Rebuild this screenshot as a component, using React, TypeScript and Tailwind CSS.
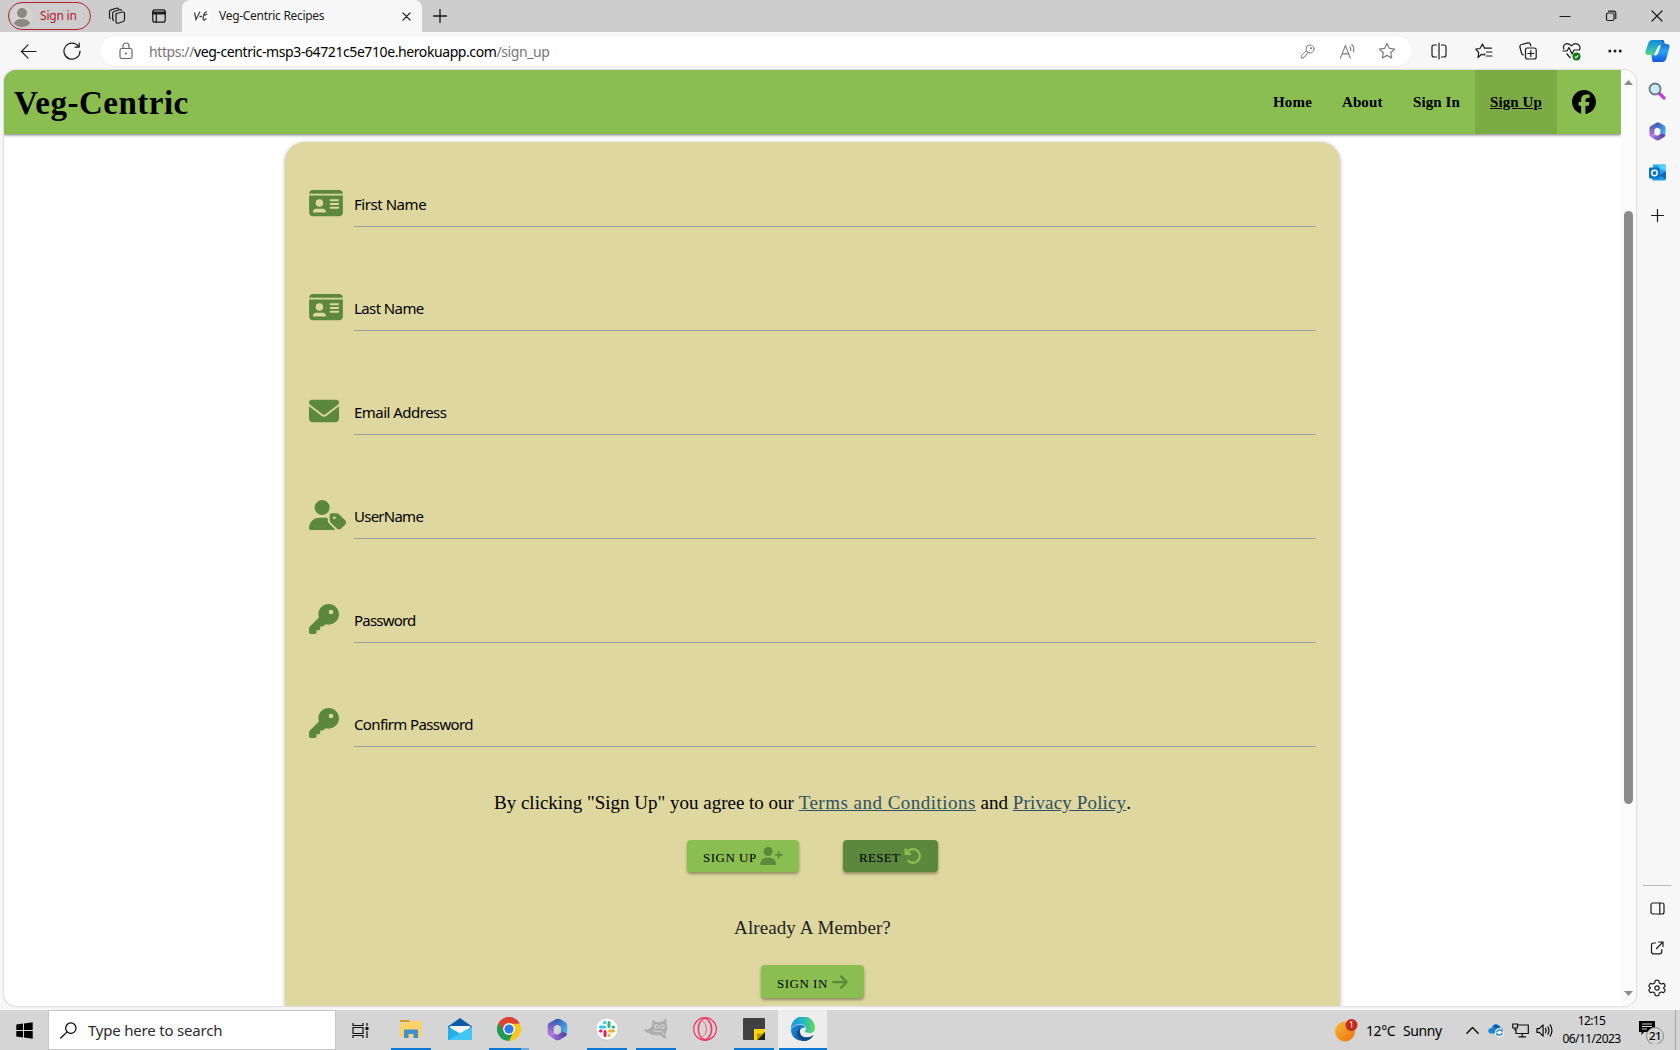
import React from "react";
import {
  FaIdCard, FaEnvelope, FaUserTag, FaKey, FaUserPlus, FaArrowRotateLeft, FaArrowRight, FaFacebook,
} from "react-icons/fa6";

const UI = "font-['Noto_Sans','Open_Sans',sans-serif]";
const SERIF = "font-['Liberation_Serif',serif]";

type SvgProps = { size?: number; className?: string; children: React.ReactNode; box?: string; sw?: number };
function Line({ size = 18, className = "", children, box = "0 0 18 18", sw = 1.2 }: SvgProps) {
  return (
    <svg width={size} height={size} viewBox={box} className={`shrink-0 ${className}`} fill="none" stroke="currentColor" strokeWidth={sw} strokeLinecap="round" strokeLinejoin="round">
      {children}
    </svg>
  );
}

function Slot({ w, children }: { w: string; children: React.ReactNode }) {
  return <div className={`flex h-full shrink-0 items-center justify-center ${w}`}>{children}</div>;
}

function M365({ size, id }: { size: number; id: string }) {
  return (
    <svg width={size} height={size} viewBox="0 0 20 20" className="shrink-0">
      <defs>
        <linearGradient id={`${id}a`} x1="0" y1="0" x2="0" y2="1"><stop offset="0" stopColor="#3a55a8" /><stop offset="1" stopColor="#c47ee8" /></linearGradient>
        <linearGradient id={`${id}b`} x1="0" y1="0" x2="1" y2="1"><stop offset="0" stopColor="#2f57b5" /><stop offset="1" stopColor="#55bdf3" /></linearGradient>
        <linearGradient id={`${id}c`} x1="0" y1="0" x2="1" y2="0"><stop offset="0" stopColor="#a97be8" /><stop offset="1" stopColor="#553a9a" /></linearGradient>
      </defs>
      <path d="M9.500 .6 3 4.200Q1.500 5.100 1.500 6.800V13.200Q1.500 14.800 3 15.600L4.500 16.200Q6.800 16 6.800 13.500V7.500L11.500 4.500V1Z" fill={`url(#${id}a)`} />
      <path d="M9 1Q11 .2 12.500 1L17 3.800Q18.500 4.700 18.500 6.500V13Q18.200 14.500 16.500 13.600L13 11.500V7.600L9.500 5.700Q7.500 3 9 1Z" fill={`url(#${id}b)`} />
      <path d="M3 15.500Q6 16 7.500 13.400L10 14.500 13.100 12.500V11L18.300 14Q18 15.300 17 15.900L12 18.900Q10 19.900 8 18.900Z" fill={`url(#${id}c)`} />
    </svg>
  );
}

function TabStrip() {
  return (
    <div className="flex h-8 shrink-0 bg-[#cdcdcd] text-[#1b1b1b]">
      <div className="flex h-full w-[182px] items-center pl-2">
        <div className="flex h-[28px] w-[83px] shrink-0 items-center rounded-full border border-[#b0202a] pl-[2px]">
          <svg width="22" height="22" viewBox="0 0 22 22" className="shrink-0">
            <defs><clipPath id="avatar"><circle cx="11" cy="11" r="11" /></clipPath></defs>
            <circle cx="11" cy="11" r="11" fill="#d6d2ce" />
            <g clipPath="url(#avatar)" fill="#8b8782"><circle cx="11" cy="8" r="5" /><ellipse cx="11" cy="18.500" rx="8" ry="4.500" /></g>
          </svg>
          <span className="ml-[7px] text-[12px] tracking-[-0.2px] whitespace-nowrap text-[#b0202a]">Sign in</span>
        </div>
        <Slot w="w-[52px]">
          <Line size={18}>
            <path d="M8.500 6.500 14.500 5Q16.500 4.800 16.500 6.500V12.500Q16.500 14 15.200 14.500L10 16.200Q8 16.500 8 14.500V8Q8 7 8.500 6.500ZM5.500 13.500Q4.700 13 4.700 12V6.500Q4.700 5 6 4.500L11.500 2.700Q13 2.300 13.500 3.300M2.300 11.500Q1.500 11 1.500 10V4.800Q1.500 3.400 2.900 2.900L8.500 1.200Q9.800 .9 10.500 1.700" />
          </Line>
        </Slot>
        <Slot w="w-8">
          <Line size={16} sw={1.4}><rect x="2" y="2" width="14" height="14" rx="2.500" /><path d="M2 4.500H16V6.500H2Z" fill="currentColor" /><path d="M6 6V16" /></Line>
        </Slot>
      </div>
      <div className="flex h-8 w-[240px] shrink-0 items-center rounded-t-lg bg-[#f7f7f7] pl-[11px]">
        <svg width="16" height="16" viewBox="0 0 16 16" className="shrink-0">
          <rect width="16" height="16" fill="#fff" />
          <path d="M1.500 4.500 3 11.500 7 3.500M6.500 8.500H9M14 4Q11.500 3.500 10.500 8T11.500 12L13.500 10.500M11 7.500 14.500 6" fill="none" stroke="#444" strokeWidth="1.300" />
        </svg>
        <span className="ml-[10px] w-[183px] text-[12px] tracking-[-0.3px] whitespace-nowrap">Veg-Centric Recipes</span>
        <Line size={9} box="0 0 10 10" sw={1.4}><path d="M1 1 9 9M9 1 1 9" /></Line>
      </div>
      <Slot w="w-[36px]"><Line size={14} box="0 0 14 14" sw={1.3}><path d="M7 .5V13.500M.5 7H13.500" /></Line></Slot>
      <div className="ml-auto flex h-full">
        <Slot w="w-[46px]"><Line size={12} box="0 0 12 12"><path d="M1 6.500H11" /></Line></Slot>
        <Slot w="w-[46px]"><Line size={12} box="0 0 12 12"><rect x="1.500" y="3" width="7.500" height="7.500" rx="1.500" /><path d="M3.500 1.200H8.500Q10.800 1.200 10.800 3.500V8.500" /></Line></Slot>
        <Slot w="w-[46px]"><Line size={12} box="0 0 12 12"><path d="M1 1 11 11M11 1 1 11" /></Line></Slot>
      </div>
    </div>
  );
}

const STAR = "M9 1.500 11.300 6.300 16.600 7 12.700 10.700 13.700 16 9 13.400 4.300 16 5.300 10.700 1.400 7 6.700 6.300Z";

function Toolbar() {
  return (
    <div className="flex h-[38px] shrink-0 items-start bg-[#f7f7f7] pt-1 text-[#1b1b1b]">
      <div className="flex h-[30px] w-[100px] items-center pl-[6px]">
        <Slot w="w-11"><Line size={17}><path d="M17 9H1.500M8.500 2 1.500 9 8.500 16" /></Line></Slot>
        <Slot w="w-11"><Line size={18}><path d="M15.500 4.500A8 8 0 1 0 17 9M16.200 1V5.200H12" /></Line></Slot>
      </div>
      <div className="flex h-[30px] w-[1312px] shrink-0 items-center rounded-full bg-white pl-[17px] shadow-[0_0_2px_rgba(0,0,0,0.08)]">
        <Line size={18} className="text-[#666]"><rect x="3" y="6.500" width="12" height="10" rx="1.800" /><path d="M6 6.500V4A3 3 0 0 1 12 4V6.500" /><circle cx="9" cy="11.500" r=".5" fill="currentColor" /></Line>
        <span className="ml-[14px] w-[1140px] text-[14px] tracking-[-0.41px] whitespace-nowrap text-[#777]">
          https://<span className="text-black">veg-centric-msp3-64721c5e710e.herokuapp.com</span>/sign_up
        </span>
        <div className="ml-[-2px] flex h-full text-[#7b7b7b]">
          <Slot w="w-10"><Line size={15}><circle cx="12" cy="6" r="4.800" /><circle cx="13" cy="5" r=".7" fill="currentColor" /><path d="M7.500 8 1.500 14V16.800H4.500L5 14.800 7 14.300 7.500 12.300 10 10.500" /></Line></Slot>
          <Slot w="w-10"><Line size={17}><path d="M1.500 16 6.800 2.800 12 16M3.400 11.500H10.300M11.500 4Q13 6 12.300 8M13.500 1.500Q16.800 5 15.200 9" /></Line></Slot>
          <Slot w="w-10"><Line size={18}><path d={STAR} /></Line></Slot>
        </div>
      </div>
      <div className="ml-[5px] flex h-[30px] items-center">
        <Slot w="w-11"><Line size={18}><path d="M6.500 3H4Q2 3 2 5V13Q2 15 4 15H6.500M11.500 3H14Q16 3 16 5V13Q16 15 14 15H11.500M9 1V17" /></Line></Slot>
        <Slot w="w-[45px]"><Line size={18}><path d="M9.800 11.800V13L6.500 12.300 3 15.500 3.700 10.500 .8 7.200 5 6.500 7.500 2 9.500 6.200 16.500 6.200M11.500 10H17M11.500 14H17" /></Line></Slot>
        <Slot w="w-[43px]"><Line size={18}><path d="M4.500 13Q3 13 2.500 11L.9 5Q.6 3.200 2.500 2.500L9 .9Q11 .5 11.500 2.500L11.800 4M8.200 6H15.200Q17.200 6 17.200 8V15Q17.200 17 15.200 17H8.500Q6.500 17 6.500 15V7.700Q6.500 6 8.200 6M11.800 8.500V14.500M8.800 11.500H14.800" /></Line></Slot>
        <Slot w="w-11">
          <svg width="19" height="19" viewBox="0 0 19 19" fill="none" stroke="currentColor" strokeWidth="1.200" strokeLinejoin="round">
            <path d="M2 7.500Q.5 4 3 2.300T9.500 3.800Q12.500 .5 15.800 2.300T17.500 7.500M.5 9H5L7 5.500 10 12 12 8H18M4.500 11.500 8.500 16" />
            <circle cx="14.500" cy="14.500" r="4" fill="#117a17" stroke="none" /><path d="m12.800 14.600 1.200 1.200 2.200-2.500" stroke="#fff" />
          </svg>
        </Slot>
        <Slot w="w-11"><svg width="14" height="4" viewBox="0 0 14 4" fill="currentColor"><circle cx="1.800" cy="2" r="1.500" /><circle cx="7" cy="2" r="1.500" /><circle cx="12.200" cy="2" r="1.500" /></svg></Slot>
        <Slot w="w-[40px]">
          <svg width="25" height="24" viewBox="0 0 25 24">
            <defs>
              <linearGradient id="cpa" x1="0" y1="0" x2="0" y2="1"><stop offset="0" stopColor="#1588d8" /><stop offset=".6" stopColor="#2db6c4" /><stop offset="1" stopColor="#57d67e" /></linearGradient>
              <linearGradient id="cpb" x1="0" y1="0" x2="0" y2="1"><stop offset="0" stopColor="#1650c0" /><stop offset=".5" stopColor="#28a6f0" /><stop offset="1" stopColor="#1455e0" /></linearGradient>
            </defs>
            <path d="M7 1H17Q19 1 19.500 4L20 6H16Q14 6 13 9L10.500 16H3Q-.5 16 .7 12L3.500 3.500Q4.300 1 7 1Z" fill="url(#cpa)" />
            <path d="M16 1H17.500Q19 1 19.700 5H22Q25.500 5 24.300 9L21.500 19Q20.500 23 17 23H8Q7 22 6.500 16H9Q11 16 12 13L14 7Q15 5 19 5Z" fill="url(#cpb)" />
            <path d="M12.500 8.500Q13.500 6 16 6L12.800 15Q11.800 16.500 9 16.500Z" fill="#fff" />
          </svg>
        </Slot>
      </div>
    </div>
  );
}

function NavBar() {
  const link = "flex h-full items-center px-[15px] text-[15px] font-bold whitespace-nowrap text-black";
  return (
    <header className="relative flex h-16 w-[1617px] shrink-0 items-center bg-[#8bbe50] pr-[10px] pl-[10px] shadow-[0_1px_3px_rgba(0,0,0,0.55)]">
      <span className={`pt-[2px] text-[33px] leading-none font-bold tracking-[0.5px] whitespace-nowrap text-black ${SERIF}`}>Veg-Centric</span>
      <nav className={`ml-auto flex h-full ${SERIF}`}>
        <a className={`${link} w-[69px] tracking-[0.2px]`}>Home</a>
        <a className={`${link} w-[71px] tracking-[0.1px]`}>About</a>
        <a className={`${link} w-[77px] tracking-[0.1px]`}>Sign In</a>
        <a className={`${link} w-[82px] bg-[#7cab46] tracking-[0.1px] underline`}>Sign Up</a>
        <a className={`${link} w-[54px]`}><FaFacebook size={24} className="shrink-0" /></a>
      </nav>
    </header>
  );
}

const FIELDS = [
  { label: "First Name", Icon: FaIdCard, width: "w-[34px]", tracking: "tracking-[-0.45px]" },
  { label: "Last Name", Icon: FaIdCard, width: "w-[34px]", tracking: "tracking-[-0.6px]" },
  { label: "Email Address", Icon: FaEnvelope, width: "w-[30px]", tracking: "tracking-[-0.52px]" },
  { label: "UserName", Icon: FaUserTag, width: "w-[37.5px]", tracking: "tracking-[-0.75px]" },
  { label: "Password", Icon: FaKey, width: "w-[30px]", tracking: "tracking-[-0.8px]" },
  { label: "Confirm Password", Icon: FaKey, width: "w-[30px]", tracking: "tracking-[-0.62px]" },
];

function SignUpCard() {
  const btn = "flex items-center rounded-[4px] pl-4 text-left text-[13px] text-black shadow-[0_2px_3px_rgba(0,0,0,0.35)]";
  return (
    <main className="mt-2 ml-[281px] flex h-[1000px] w-[1055px] shrink-0 flex-col rounded-[20px] bg-[#ded79f] pt-[33px] shadow-[0_1px_4px_rgba(0,0,0,0.3)]">
      {FIELDS.map(({ label, Icon, width, tracking }) => (
        <div key={label} className="flex h-[104px] shrink-0 pl-6">
          <div className="flex h-[55px] w-[45px] items-center"><Icon className={`h-[30px] shrink-0 text-[#5b883d] ${width}`} /></div>
          <div className="flex h-[52px] w-[962px] items-end border-b border-[#9e9e9e] pb-3">
            <span className={`text-[15px] leading-[20px] whitespace-nowrap text-black ${tracking}`}>{label}</span>
          </div>
        </div>
      ))}
      <div className={`-mt-[11px] flex flex-col items-center ${SERIF}`}>
        <p className="h-[30px] text-[19px] leading-[30px] whitespace-nowrap text-black">
          By clicking "Sign Up" you agree to our <a className="tracking-[0.48px] text-[#2f5260] underline">Terms and Conditions</a> and <a className="tracking-[0.15px] text-[#2f5260] underline">Privacy Policy</a>.
        </p>
        <div className="mt-[22px] flex gap-11">
          <button className={`${btn} h-8 w-[112px] bg-[#8bbe50] tracking-[0.5px]`}><span className="w-[57px] pt-1 whitespace-nowrap">SIGN UP</span><FaUserPlus className="h-[18px] w-[23px] text-[#5b883d]" /></button>
          <button className={`${btn} h-8 w-[95px] bg-[#5b883d] tracking-[0.3px]`}><span className="w-[45px] pt-1 whitespace-nowrap">RESET</span><FaArrowRotateLeft className="h-[18px] w-[18px] text-[#8bbe50]" /></button>
        </div>
        <p className="mt-[41px] h-[30px] text-[19px] leading-[30px] tracking-[0.1px] whitespace-nowrap text-[#222]">Already A Member?</p>
        <button className={`${btn} mt-[22px] h-[33px] w-[103px] bg-[#8bbe50] tracking-[0.5px]`}><span className="w-[55px] pt-1 whitespace-nowrap">SIGN IN</span><FaArrowRight className="h-[18px] w-[16px] text-[#5b883d]" /></button>
      </div>
    </main>
  );
}

function ScrollBar() {
  return (
    <div className="flex h-full w-[15px] shrink-0 flex-col items-center bg-[#fbfbfb] pt-[10px]">
      <svg width="9" height="5" viewBox="0 0 9 5" fill="#8b8b8b"><path d="M4.500 0 9 5H0Z" /></svg>
      <div className="mt-[126px] h-[593px] w-[9px] rounded-full bg-[#8b8b8b]" />
      <svg className="mt-[187px]" width="9" height="5" viewBox="0 0 9 5" fill="#8b8b8b"><path d="M4.500 5 9 0H0Z" /></svg>
    </div>
  );
}

function SideBar() {
  return (
    <aside className="flex w-[42px] shrink-0 flex-col items-center pt-px text-[#1b1b1b]">
      <div className="flex h-10 items-center">
        <svg width="18" height="18" viewBox="0 0 18 18"><path d="m11 11 5 5" stroke="#c43be8" strokeWidth="3.200" strokeLinecap="round" /><circle cx="7" cy="7" r="5.500" fill="#cdeafa" stroke="#6f7680" strokeWidth="1.800" /></svg>
      </div>
      <div className="flex h-[41px] items-center"><M365 size={19} id="side" /></div>
      <div className="flex h-10 items-center">
        <svg width="17" height="17" viewBox="0 0 17 17">
          <rect x="4" y=".5" width="12.500" height="9" fill="#28a8ea" /><rect x="10" y=".5" width="6.500" height="5" fill="#50d2fb" />
          <path d="M3 7H17V15Q17 16.500 15.500 16.500H4.500Q3 16.500 3 15Z" fill="#1f9de4" /><path d="M17 7.500V15L10 11.500Z" fill="#1565b5" />
          <rect x="0" y="3.500" width="11" height="11" rx="1" fill="#0f70c4" /><circle cx="5.500" cy="9" r="2.700" fill="none" stroke="#fff" strokeWidth="1.500" />
        </svg>
      </div>
      <div className="flex h-[46px] items-center"><Line size={13} box="0 0 12 12" sw={1.1}><path d="M6 .5V11.500M.5 6H11.500" /></Line></div>
      <div className="mt-[647px] h-px w-7 shrink-0 bg-[#b9b9b9]" />
      <div className="mt-[2px] flex h-10 items-center"><Line size={15} box="0 0 15 15"><rect x="1" y="2" width="13" height="11" rx="2" /><path d="M9.800 2V13" /></Line></div>
      <div className="flex h-10 items-center"><Line size={14} box="0 0 14 14"><path d="M5.500 2H3.500Q1.500 2 1.500 4V10.500Q1.500 12.800 3.500 12.800H9.500Q11.800 12.800 11.800 10.500V8.500M8.500 1H13V5.500M13 1 6.500 7.500" /></Line></div>
      <div className="flex h-10 items-center">
        <Line size={18}><path d="M7.300 1.500Q9 .8 10.700 1.500L11.300 3.900 13.200 5 15.600 4.300Q17 5.500 17.200 7.200L15.500 9 17.200 10.800Q16.800 12.500 15.600 13.700L13.200 13 11.300 14.100 10.700 16.500Q9 17.200 7.300 16.500L6.700 14.100 4.800 13 2.400 13.700Q1.200 12.500 .8 10.800L2.500 9 .8 7.200Q1.200 5.500 2.400 4.300L4.800 5 6.700 3.900Z" /><circle cx="9" cy="9" r="2.200" /></Line>
      </div>
    </aside>
  );
}

function TaskItem({ bar = "", active = false, extra = false, children }: { bar?: string; active?: boolean; extra?: boolean; children: React.ReactNode }) {
  return (
    <div className={`flex h-10 w-[49px] shrink-0 flex-col items-center ${active ? "bg-[#ededed]" : ""}`}>
      <div className="flex h-[38px] items-center justify-center">{children}</div>
      <div className="flex h-[2px] w-full justify-center"><div className={`h-full ${bar}`} />{extra && <div className="h-full w-2 bg-[#6fa9e0]" />}</div>
    </div>
  );
}

function TaskBar() {
  const on = "w-10 bg-[#0b78d4]";
  return (
    <footer className="flex h-10 shrink-0 items-center bg-[#d5d5d5]">
      <Slot w="w-12">
        <svg width="17" height="17" viewBox="0 0 17 17"><path d="M.3 2.500 7 1.500V8H.3ZM8 1.400 16.700 .2V8H8ZM.3 9H7V15.500L.3 14.500ZM8 9H16.700V16.800L8 15.600Z" /></svg>
      </Slot>
      <div className="flex h-10 w-[288px] shrink-0 items-center border border-[#c4c4c4] bg-white pl-[11px]">
        <Line size={17} sw={1.3}><circle cx="11.500" cy="6.500" r="5.500" /><path d="M7.500 10.500 .8 17" /></Line>
        <span className="ml-[11px] text-[15px] tracking-[-0.2px] whitespace-nowrap text-[#2b2b2b]">Type here to search</span>
      </div>
      <Slot w="w-[48px]">
        <svg width="17" height="17" viewBox="0 0 17 17" fill="none" stroke="#111" strokeWidth="1.200"><path d="M1 1V3.500H11V1M1 5.500H11V11.500H1ZM1 16V13.500H11V16M15 1V4M15 9V16" /><path d="M13.500 5H16.500V8H13.500Z" fill="#111" stroke="none" /></svg>
      </Slot>
      <div className="ml-[2px] flex">
        <TaskItem bar={on}>
          <svg width="22" height="20" viewBox="0 0 22 20"><path d="M0 2Q0 1 1 1H9L10.500 3H0Z" fill="#d99a12" /><path d="M0 4H9L10.500 2H20.500Q21.500 2 21.500 3V18H0Z" fill="#fdd268" /><path d="M4 19V11.500Q4 10.500 5 10.500H17Q18 10.500 18 11.500V19H13.500V15H8.500V19Z" fill="#3d8fd0" /></svg>
        </TaskItem>
        <TaskItem>
          <svg width="24" height="22" viewBox="0 0 24 22"><path d="M0 8.500 12 0 24 8.500V12H0Z" fill="#0b5ba8" /><path d="M2 8H22V15H2Z" fill="#f5f5f5" /><path d="M0 8.500 12 15.500 24 8.500V22H0Z" fill="#27aee8" /><path d="M24 9V22H1L12 15.500Z" fill="#42c4f5" /></svg>
        </TaskItem>
        <TaskItem bar="w-8 bg-[#0b78d4]" extra>
          <svg width="24" height="24" viewBox="0 0 24 24"><path d="M12 12 1.600 6A12 12 0 0 1 22.400 6Z" fill="#dd4233" /><path d="M12 12 1.600 6A12 12 0 0 0 12 24L17.200 15Z" fill="#229a52" /><path d="M12 12V6.500H22.600A12 12 0 0 1 12 24L17 15Z" fill="#fcc619" /><path d="M1.600 6Q5 1 12 0 19 .5 22.600 6.500H12L7 14.500Z" fill="#dd4233" /><circle cx="12" cy="12" r="5.900" fill="#fff" /><circle cx="12" cy="12" r="4.600" fill="#2b7de9" /></svg>
        </TaskItem>
        <TaskItem>
          <M365 size={23} id="task" />
        </TaskItem>
        <TaskItem bar={on}>
          <svg width="24" height="24" viewBox="0 0 24 24">
            <circle cx="12" cy="12" r="11.200" fill="#fff" stroke="#c2bfc2" strokeWidth=".8" />
            <g strokeWidth="3" strokeLinecap="round"><path d="M5.500 10H9.500M10 5.500H9.500" stroke="#36c5f0" /><path d="M14 5.500V9.500M18.500 10H18" stroke="#2eb67d" /><path d="M14.500 14H18.500M14 18.500V18" stroke="#ecb22e" /><path d="M10 14.500V18.500M5.500 14H6" stroke="#e01e5a" /></g>
          </svg>
        </TaskItem>
        <TaskItem bar={on}>
          <svg width="24" height="22" viewBox="0 0 24 22"><path d="M0 11Q5 12.500 8 8L8.500 1.500 12 4H18L22 0 22.500 5Q24 10 22.500 13 20 17 23 21L19.500 20 16 17Q8 18 5 15 1 15 0 11Z" fill="#adadad" /><circle cx="12.500" cy="8.500" r="2.300" fill="#d5d5d5" /><circle cx="18.500" cy="8.500" r="2.300" fill="#d5d5d5" /><circle cx="12.800" cy="8.500" r="1" fill="#999" /><circle cx="18.300" cy="8.500" r="1" fill="#999" /><path d="M9 12.500Q14 14.500 17 13L20 17" stroke="#d5d5d5" fill="none" /></svg>
        </TaskItem>
        <TaskItem>
          <svg width="24" height="24" viewBox="0 0 24 24" fill="none" stroke="#f0335c" strokeWidth="1.200"><circle cx="12" cy="12" r="11.300" /><ellipse cx="12" cy="12" rx="6.500" ry="10.500" /><path d="M11 2A9 10.500 0 0 0 11 22M13 2A9 10.500 0 0 1 13 22" strokeWidth=".5" /><path d="M9.500 4Q13.500 6 13.500 12T9.500 20M14.500 4Q18.500 6 18.500 12T14.500 20" strokeWidth=".7" /></svg>
        </TaskItem>
        <TaskItem bar={on}>
          <svg width="22" height="22" viewBox="0 0 22 22"><rect width="22" height="22" rx="1" fill="#404040" /><path d="M11 11H22V14L14 22H11Z" fill="#ffd60a" /><path d="M14 22 22 14V22Z" fill="#222" /><path d="M14 22V15.500H21Z" fill="#b99700" /></svg>
        </TaskItem>
        <TaskItem bar="w-12 bg-[#0b78d4]" active>
          <svg width="24" height="24" viewBox="0 0 24 24">
            <defs>
              <linearGradient id="eda" x1="0" x2="1"><stop offset="0" stopColor="#1c93dc" /><stop offset=".5" stopColor="#28b5c6" /><stop offset="1" stopColor="#63dc50" /></linearGradient>
              <linearGradient id="edb" x1="0" y1="0" x2="1" y2="1"><stop offset="0" stopColor="#1c8edc" /><stop offset="1" stopColor="#0f4f9c" /></linearGradient>
            </defs>
            <path d="M0 11.500A12 12 0 0 1 24 11Q24 16 18.500 16 14 16 14 14.300L15 12Q15 7.500 9.500 7 3.500 7 0 11.500Z" fill="url(#eda)" />
            <path d="M0 12Q3.500 7.500 9 7.500 13.500 8 14.500 10.500 9.500 10 8.800 14.500 9 21 16.500 20.500 20 20 22.500 18 19 24 12 24 0 23 0 12Z" fill="url(#edb)" />
            <path d="M8.800 14Q9 20.500 16 20.500 20 20.200 22.500 18 19 24 12 24 6 22 6 16 6.500 12 9 9.500 8 12 8.800 14Z" fill="#114a8b" />
          </svg>
        </TaskItem>
      </div>
      <div className="ml-auto flex h-full items-center text-black">
        <svg width="23" height="23" viewBox="0 0 23 23" className="shrink-0">
          <defs><linearGradient id="sun" x1="0" y1="0" x2="1" y2="1"><stop offset="0" stopColor="#f0bd35" /><stop offset="1" stopColor="#f26c0c" /></linearGradient></defs>
          <circle cx="10" cy="12.500" r="10" fill="url(#sun)" /><circle cx="16.500" cy="6" r="6" fill="#c42b1c" /><text x="16.500" y="9" fontSize="8.500" fill="#fff" textAnchor="middle">1</text>
        </svg>
        <span className="ml-[8px] w-[37px] text-[14px] tracking-[-0.4px] whitespace-nowrap">12°C</span>
        <span className="w-[57px] text-[14px] tracking-[-0.4px] whitespace-nowrap">Sunny</span>
        <Slot w="w-6"><Line size={13} box="0 0 12 12"><path d="M.8 8.500 6 3.300 11.200 8.500" /></Line></Slot>
        <Slot w="w-6">
          <svg width="17" height="14" viewBox="0 0 17 14"><path d="M3 10.500Q0 10 .3 7.500T3.500 5Q5 .8 8.500 1.200 11.500 1.500 12.500 4.500 15.500 5 15.500 8V10.500Z" fill="#1683d9" /><path d="M5 3Q8 -.5 12 4L8 6Z" fill="#0a5cae" /><circle cx="11.500" cy="9.500" r="4.500" fill="#fff" /><path d="M8.700 9A3 3 0 0 1 14 8V6.500M14.300 10A3 3 0 0 1 9 11V12.500" fill="none" stroke="#1670c8" strokeWidth="1.300" /></svg>
        </Slot>
        <Slot w="w-6"><svg width="17" height="15" viewBox="0 0 17 15" fill="none" stroke="#111" strokeWidth="1.200"><path d="M6 2H16.300V10.500H4V6M10.200 10.500V13.500M6.500 13.800H14M.8 1H5.500V5H.8ZM3 5V7H4" /></svg></Slot>
        <Slot w="w-6"><Line size={17} box="0 0 18 16"><path d="M1 6H3.500L7.500 2V14L3.500 10H1ZM10 5.800Q11.500 8 10 10.200M12.500 4Q15 8 12.500 12M15 2Q18.800 8 15 14" /></Line></Slot>
        <div className="ml-[5px] w-[61px] text-center text-[12px] leading-[18px] tracking-[-0.6px] whitespace-nowrap"><div>12:15</div><div>06/11/2023</div></div>
        <div className="flex h-full w-[53px] items-center justify-end pr-[10px]">
          <svg width="28" height="28" viewBox="0 0 28 28" className="shrink-0"><path d="M2 5H18V16H7L4.500 19V16H2Z" fill="#000" /><path d="M5 8H15M5 10.500H15M5 13H10" stroke="#d5d5d5" strokeWidth="1" /><circle cx="18" cy="20" r="8.500" fill="#d5d5d5" stroke="#777" strokeWidth=".8" clipPath="inset(0)" /><text x="18" y="23.800" fontSize="11.500" fontWeight="500" letterSpacing="-.5" textAnchor="middle">21</text></svg>
        </div>
        <div className="h-full w-[5px] border-l border-[#a5a5a5]" />
      </div>
    </footer>
  );
}

export default function App() {
  return (
    <div className={`flex h-[1050px] w-[1680px] flex-col overflow-hidden bg-[#f7f7f7] ${UI}`}>
      <TabStrip />
      <Toolbar />
      <div className="flex h-[940px] shrink-0 pl-1">
        <div className="flex h-[936px] w-[1632px] shrink-0 overflow-hidden rounded-xl bg-white shadow-[0_0_2px_rgba(0,0,0,0.35)]">
          <div className="flex h-full w-[1617px] shrink-0 flex-col overflow-hidden"><NavBar /><SignUpCard /></div>
          <ScrollBar />
        </div>
        <SideBar />
      </div>
      <TaskBar />
    </div>
  );
}
